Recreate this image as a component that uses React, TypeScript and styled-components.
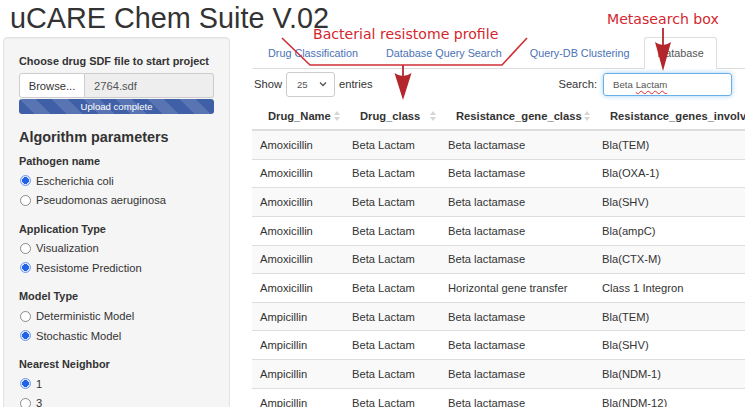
import React from 'react';
import styled, { createGlobalStyle } from 'styled-components';

interface IRow {
  name: string;
  cls: string;
  geneClass: string;
  genes: string;
}

const rows: IRow[] = [
  { name: 'Amoxicillin', cls: 'Beta Lactam', geneClass: 'Beta lactamase', genes: 'Bla(TEM)' },
  { name: 'Amoxicillin', cls: 'Beta Lactam', geneClass: 'Beta lactamase', genes: 'Bla(OXA-1)' },
  { name: 'Amoxicillin', cls: 'Beta Lactam', geneClass: 'Beta lactamase', genes: 'Bla(SHV)' },
  { name: 'Amoxicillin', cls: 'Beta Lactam', geneClass: 'Beta lactamase', genes: 'Bla(ampC)' },
  { name: 'Amoxicillin', cls: 'Beta Lactam', geneClass: 'Beta lactamase', genes: 'Bla(CTX-M)' },
  { name: 'Amoxicillin', cls: 'Beta Lactam', geneClass: 'Horizontal gene transfer', genes: 'Class 1 Integron' },
  { name: 'Ampicillin', cls: 'Beta Lactam', geneClass: 'Beta lactamase', genes: 'Bla(TEM)' },
  { name: 'Ampicillin', cls: 'Beta Lactam', geneClass: 'Beta lactamase', genes: 'Bla(SHV)' },
  { name: 'Ampicillin', cls: 'Beta Lactam', geneClass: 'Beta lactamase', genes: 'Bla(NDM-1)' },
  { name: 'Ampicillin', cls: 'Beta Lactam', geneClass: 'Beta lactamase', genes: 'Bla(NDM-12)' },
];

const groups = [
  { title: 'Pathogen name', options: ['Escherichia coli', 'Pseudomonas aeruginosa'], checked: 0 },
  { title: 'Application Type', options: ['Visualization', 'Resistome Prediction'], checked: 1 },
  { title: 'Model Type', options: ['Deterministic Model', 'Stochastic Model'], checked: 1 },
  { title: 'Nearest Neighbor', options: ['1', '3'], checked: 0 },
];

const tabs = ['Drug Classification', 'Database Query Search', 'Query-DB Clustering', 'Database'];
const columns = ['Drug_Name', 'Drug_class', 'Resistance_gene_class', 'Resistance_genes_involved'];

const SortIcon = () => (
  <svg width="6" height="10" viewBox="0 0 6 10">
    <path d="M3 0 L6 4 L0 4 Z" fill="#d6d6d6" />
    <path d="M3 10 L6 6 L0 6 Z" fill="#d6d6d6" />
  </svg>
);

const App: React.FC = () => (
  <Page>
    <GlobalStyle />
    <Title>uCARE Chem Suite V.02</Title>
    <Columns>
      <Sidebar>
        <FieldLabel>Choose drug SDF file to start project</FieldLabel>
        <InputGroup>
          <BrowseButton>Browse...</BrowseButton>
          <FileName>2764.sdf</FileName>
        </InputGroup>
        <Progress>Upload complete</Progress>
        <AlgoTitle>Algorithm parameters</AlgoTitle>
        {groups.map((g) => (
          <RadioGroup key={g.title}>
            <FieldLabel>{g.title}</FieldLabel>
            {g.options.map((o, i) => (
              <RadioRow key={o}>
                <RadioDot checked={i === g.checked} />
                {o}
              </RadioRow>
            ))}
          </RadioGroup>
        ))}
      </Sidebar>
      <Main>
        <TabBar>
          {tabs.map((t, i) => (
            <Tab key={t} active={i === tabs.length - 1}>
              {t}
            </Tab>
          ))}
        </TabBar>
        <Controls>
          <Length>
            Show
            <Select>
              25
              <svg width="8" height="6" viewBox="0 0 8 6">
                <polyline points="1,1.5 4,4.5 7,1.5" fill="none" stroke="#555" strokeWidth="1.3" />
              </svg>
            </Select>
            entries
          </Length>
          <Filter>
            Search:
            <SearchInput>
              Beta <Misspelled>Lactam</Misspelled>
            </SearchInput>
          </Filter>
        </Controls>
        <Table>
          <HeaderRow>
            {columns.map((c) => (
              <HeaderCell key={c}>
                <span>{c}</span>
                <SortIcon />
              </HeaderCell>
            ))}
          </HeaderRow>
          {rows.map((r, i) => (
            <BodyRow key={i} striped={i % 2 === 0}>
              <Cell>{r.name}</Cell>
              <Cell>{r.cls}</Cell>
              <Cell>{r.geneClass}</Cell>
              <Cell>{r.genes}</Cell>
            </BodyRow>
          ))}
        </Table>
      </Main>
    </Columns>

    {/* red annotations drawn over the screenshot */}
    <Overlay width="745" height="407" viewBox="0 0 745 407">
      <path d="M282 38 L310 65 L502 65 L527 38" fill="none" stroke="#cf2f35" strokeWidth="1.6" />
      <line x1="403" y1="65" x2="403" y2="78" stroke="#b3262c" strokeWidth="1.8" />
      <path d="M394.5 73 Q403 79 411.5 73 L403 100 Z" fill="#b3262c" />
      <line x1="663" y1="28" x2="663" y2="46" stroke="#b3262c" strokeWidth="1.8" />
      <path d="M655 42 Q663 48 671 42 L663 71 Z" fill="#b3262c" />
    </Overlay>
    <Callout left={313} top={26}>Bacterial resistome profile</Callout>
    <Callout left={607} top={11}>Metasearch box</Callout>
  </Page>
);

export default App;

const GlobalStyle = createGlobalStyle`
  html, body {
    margin: 0;
    padding: 0;
    background: #fff;
  }
  body {
    font-family: "Liberation Sans", Arial, Helvetica, sans-serif;
    font-size: 11.2px;
    color: #333;
    overflow: hidden;
  }
  * {
    box-sizing: border-box;
  }
`;

const Page = styled.div`
  position: relative;
  width: 745px;
  height: 407px;
  overflow: hidden;
`;

const Title = styled.h1`
  margin: 0;
  padding: 3px 0 0 10px;
  height: 37px;
  font-size: 28.8px;
  font-weight: 400;
  line-height: 31px;
  color: #333;
`;

const Columns = styled.div`
  display: flex;
  align-items: flex-start;
`;

const Sidebar = styled.div`
  flex: none;
  width: 227px;
  min-height: 390px;
  margin-left: 3px;
  padding: 16px 15px;
  background: #f5f5f5;
  border: 1px solid #e3e3e3;
  border-radius: 4px;
  box-shadow: inset 0 1px 1px rgba(0, 0, 0, 0.05);
`;

const FieldLabel = styled.div`
  font-size: 10.9px;
  font-weight: bold;
  line-height: 14px;
  white-space: nowrap;
  margin-bottom: 5px;
`;

const InputGroup = styled.div`
  display: flex;
  height: 25px;
`;

const BrowseButton = styled.div`
  width: 66px;
  display: flex;
  align-items: center;
  justify-content: center;
  background: #fff;
  border: 1px solid #ccc;
  border-radius: 3px 0 0 3px;
`;

const FileName = styled.div`
  flex: 1;
  display: flex;
  align-items: center;
  padding-left: 9px;
  background: #eee;
  border: 1px solid #ccc;
  border-left: none;
  border-radius: 0 3px 3px 0;
  color: #555;
`;

const Progress = styled.div`
  margin-top: 1px;
  height: 15px;
  line-height: 15px;
  border-radius: 3px;
  text-align: center;
  font-size: 9.6px;
  color: #fff;
  background-color: #3f5fa7;
  background-image: linear-gradient(
    45deg,
    rgba(255, 255, 255, 0.13) 25%,
    transparent 25%,
    transparent 50%,
    rgba(255, 255, 255, 0.13) 50%,
    rgba(255, 255, 255, 0.13) 75%,
    transparent 75%,
    transparent
  );
  background-size: 32px 32px;
`;

const AlgoTitle = styled.div`
  margin: 15px 0 8px;
  font-size: 14.4px;
  font-weight: bold;
  line-height: 17px;
  color: #333;
`;

const RadioGroup = styled.div`
  margin-bottom: 11.7px;
  ${FieldLabel} {
    margin-bottom: 3px;
  }
`;

const RadioRow = styled.div`
  display: flex;
  align-items: center;
  gap: 5px;
  height: 19.5px;
  padding-left: 1px;
`;

const RadioDot = styled.span<{ checked: boolean }>`
  flex: none;
  width: 11px;
  height: 11px;
  border-radius: 50%;
  border: 1px solid ${(p) => (p.checked ? '#6f98f0' : '#8a8a8a')};
  background: ${(p) =>
    p.checked ? 'radial-gradient(circle, #2262e6 0 3.2px, #dbe6fd 3.6px)' : '#fff'};
`;

const Main = styled.div`
  flex: 1;
  min-width: 0;
  margin-left: 23px;
`;

const TabBar = styled.div`
  display: flex;
  padding-left: 2px;
  border-bottom: 1px solid #ddd;
`;

const Tab = styled.div<{ active?: boolean }>`
  padding: 8px 12px;
  margin-right: 2px;
  margin-bottom: -1px;
  font-size: 10.8px;
  line-height: 14px;
  white-space: nowrap;
  border: 1px solid ${(p) => (p.active ? '#ddd' : 'transparent')};
  border-bottom-color: transparent;
  border-radius: 3px 3px 0 0;
  background: ${(p) => (p.active ? '#fff' : 'transparent')};
  color: ${(p) => (p.active ? '#555' : '#4a72b6')};
`;

const Controls = styled.div`
  display: flex;
  align-items: center;
  justify-content: space-between;
  height: 26px;
  margin-top: 2px;
  padding-right: 13px;
`;

const Length = styled.div`
  display: flex;
  align-items: center;
  gap: 4px;
  padding-left: 1px;
`;

const Select = styled.div`
  width: 49px;
  height: 25px;
  display: flex;
  align-items: center;
  justify-content: space-between;
  padding: 0 7px 0 10px;
  border: 1px solid #ccc;
  border-radius: 3px;
  font-size: 9.6px;
  color: #555;
`;

const Filter = styled.div`
  display: flex;
  align-items: center;
  gap: 6px;
`;

const SearchInput = styled.div`
  width: 129px;
  height: 23px;
  display: flex;
  align-items: center;
  gap: 3px;
  padding-left: 9px;
  border: 1px solid #66afe9;
  border-radius: 3px;
  box-shadow: 0 0 5px rgba(102, 175, 233, 0.6);
  font-size: 9.6px;
  color: #555;
`;

const Misspelled = styled.span`
  text-decoration: underline wavy #e0282e;
  text-underline-offset: 2px;
  text-decoration-thickness: 1px;
`;

const gridCols = '92px 96px 154px 280px';

const Table = styled.div`
  width: 622px;
  margin-top: 5px;
  margin-left: -1px;
`;

const HeaderRow = styled.div`
  display: grid;
  grid-template-columns: ${gridCols};
  height: 29px;
  border-bottom: 2px solid #ddd;
  align-items: center;
`;

const HeaderCell = styled.div`
  display: flex;
  align-items: center;
  justify-content: space-between;
  padding: 0 4px 0 16px;
  font-weight: bold;
  white-space: nowrap;
  overflow: hidden;
`;

const BodyRow = styled.div<{ striped?: boolean }>`
  display: grid;
  grid-template-columns: ${gridCols};
  align-items: center;
  height: 28.65px;
  border-bottom: 1px solid #ddd;
  background: ${(p) => (p.striped ? '#f9f9f9' : '#fff')};
`;

const Cell = styled.div`
  padding-left: 8px;
  white-space: nowrap;
`;

const Overlay = styled.svg`
  position: absolute;
  top: 0;
  left: 0;
  pointer-events: none;
`;

const Callout = styled.div<{ left: number; top: number }>`
  position: absolute;
  left: ${(p) => p.left}px;
  top: ${(p) => p.top}px;
  font-family: "DejaVu Sans", sans-serif;
  font-size: 14.1px;
  line-height: 17px;
  color: #d3262e;
  white-space: nowrap;
`;
